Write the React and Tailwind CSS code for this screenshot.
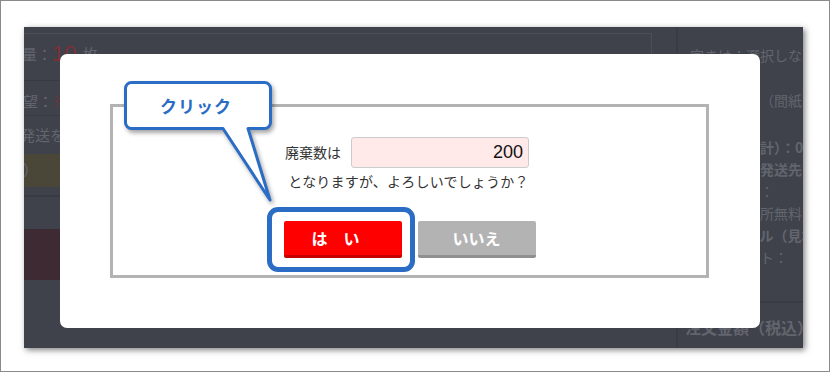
export default function App() {
  const jp = "font-['Noto_Sans_CJK_JP','Noto_Sans',sans-serif]";
  return (
    <div className={`w-[830px] h-[372px] bg-white border border-[#8a8a8a] pt-[26px] pl-[23px] ${jp}`}>
      <div className="relative w-[779px] h-[321px] bg-[#3f424b] shadow-[2px_2px_6px_rgba(0,0,0,0.5)] flex">
        {/* background page (dimmed) */}
        <div className="w-[652px] h-full flex flex-col overflow-hidden text-[15px] text-[#62656d]">
          <div className="h-[6px]" />
          <div className="mr-[24px] border-t border-r border-[#4b4e57] flex flex-col">
            <div className="h-[47px] border-b border-[#373a42] flex items-center pb-[6px] whitespace-nowrap">
              <span className="ml-[-2px]">量：</span>
              <span className="font-['Liberation_Sans',sans-serif] text-[22px] text-[#7d3038] leading-none">10</span>
              <span className="ml-[6px]">枚</span>
            </div>
            <div className="h-[35px] border-b border-[#373a42] flex items-center pt-[6px] whitespace-nowrap">
              <span className="ml-[-1px]">望：</span>
              <span className="text-[#7d3038]">※必須</span>
            </div>
            <div className="h-[38px] flex items-center whitespace-nowrap">
              <span className="ml-[-4px]">発送を選択</span>
            </div>
            <div className="h-[33px] bg-[#4a4739] flex items-center whitespace-nowrap">
              <span className="ml-[-1px]">）</span>
            </div>
            <div className="h-[10px] border-b-2 border-[#373a42]" />
            <div className="h-[32px]" />
            <div className="h-[51px] bg-[#3e2a32]" />
          </div>
        </div>
        <div className="flex-1 h-full border-l-2 border-[#393c44] pl-[12px] text-[14px] text-[#62656d] whitespace-nowrap overflow-hidden flex flex-col">
          <div className="h-[17px]" />
          <div className="h-[22px] leading-[22px]">字まは：選択しない</div>
          <div className="h-[23px]" />
          <div className="h-[22px] leading-[22px]">セット用紙（間紙）</div>
          <div className="h-[25px]" />
          <div className="h-[22px] leading-[22px] font-bold">総部数（合計）：0</div>
          <div className="h-[22px] leading-[22px] font-bold">お届け先の発送先</div>
          <div className="h-[22px] leading-[22px]">　　　　　：</div>
          <div className="h-[22px] leading-[22px]">最寄り営業所無料</div>
          <div className="h-[22px] leading-[22px] font-bold">無料サンプル（見本）</div>
          <div className="h-[22px] leading-[22px]">利用ポイント：</div>
          <div className="h-[35px] border-b-2 border-[#393c44] ml-[-12px]" />
          <div className="mt-[13px] h-[22px] leading-[22px] font-bold text-[16px] ml-[-5px]">注文金額（税込）</div>
        </div>

        {/* modal */}
        <div className="absolute left-[36px] top-[27px] w-[700px] h-[274px] bg-white rounded-[7px] pt-[50px] pb-[50px] pl-[50px] pr-[51px]">
          <div className="w-full h-full border-[3px] border-[#b3b3b3] flex flex-col items-center pt-[30px] text-[#333]">
            <div className="flex items-center ml-[-5px]">
              <span className="text-[14px]">廃棄数は</span>
              <div className="ml-[10px] w-[178px] h-[31px] bg-[#ffe9e9] border border-[#cccccc] rounded-[3px] flex items-center justify-end pr-[5px] font-['Liberation_Sans',sans-serif] text-[18px] text-[#111]">
                200
              </div>
            </div>
            <div className="mt-[3px] text-[14px] leading-[20px] tracking-[0.2px] ml-[-2px]">となりますが、よろしいでしょうか？</div>
            <div className="mt-[30px] flex gap-[16px]">
              <div className="w-[118px] h-[37px] bg-[#ff0000] border-b-[3px] border-[#c40000] rounded-[2px] flex items-center justify-center pr-[14px] text-white font-bold text-[16px]">
                は　い
              </div>
              <div className="w-[118px] h-[37px] bg-[#b3b3b3] border-b-[3px] border-[#8f8f8f] rounded-[2px] flex items-center justify-center text-white font-bold text-[16px]">
                いいえ
              </div>
            </div>
          </div>
        </div>

        {/* highlight around はい */}
        <div className="absolute left-[243px] top-[180px] w-[148px] h-[65px] border-[5px] border-[#2b6cc4] rounded-[11px]" />

        {/* callout */}
        <div className="absolute left-[100px] top-[54px] w-[150px] h-[122px]">
          <svg width="150" height="122" viewBox="0 0 150 122" className="absolute left-0 top-0 [filter:drop-shadow(2px_3px_2px_rgba(0,0,0,0.35))]">
            <path
              d="M 7.5 1.5 H 140.5 A 6 6 0 0 1 146.5 7.5 V 41.5 A 6 6 0 0 1 140.5 47.5 H 124 L 146 119 L 99 47.5 H 7.5 A 6 6 0 0 1 1.5 41.5 V 7.5 A 6 6 0 0 1 7.5 1.5 Z"
              fill="#ffffff"
              stroke="#2b6cc4"
              strokeWidth="3"
              strokeLinejoin="round"
            />
          </svg>
          <div className="absolute left-0 top-0 w-[148px] h-[49px] flex items-center justify-center pr-[4px] text-[17px] font-bold text-[#2b6cc4] tracking-[1px]">
            クリック
          </div>
        </div>
      </div>
    </div>
  );
}
